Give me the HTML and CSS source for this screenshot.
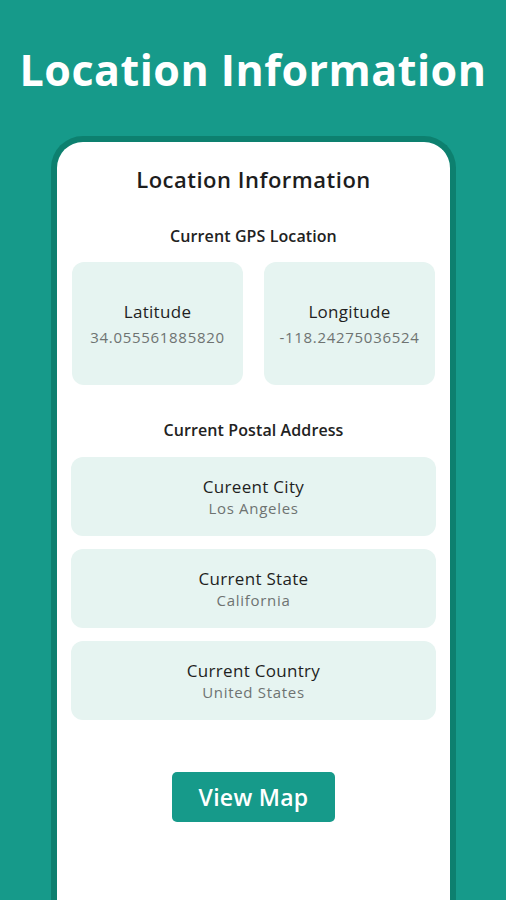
FILE: index.html
```html
<!DOCTYPE html>
<html>
  <head>
    <meta name="viewport" content="width=device-width, initial-scale=1" />
    <title>Location Information</title>
    <link rel="stylesheet" href="styles.css">
  </head>
  <body>
    <h1 class="headline">Location Information</h1>

    <div class="phone">
      <div class="screen">
        <h2 class="screen-title">Location Information</h2>

        <div class="section-label">Current GPS Location</div>
        <div class="coords">
          <div class="info-card tall">
            <div class="info-name">Latitude</div>
            <div class="info-value">34.055561885820</div>
          </div>
          <div class="info-card tall">
            <div class="info-name">Longitude</div>
            <div class="info-value">-118.24275036524</div>
          </div>
        </div>

        <div class="section-label postal">Current Postal Address</div>
        <div class="address">
          <div class="info-card">
            <div class="info-name">Cureent City</div>
            <div class="info-value">Los Angeles</div>
          </div>
          <div class="info-card">
            <div class="info-name">Current State</div>
            <div class="info-value">California</div>
          </div>
          <div class="info-card">
            <div class="info-name">Current Country</div>
            <div class="info-value">United States</div>
          </div>
        </div>

        <div class="actions">
          <button class="map-btn">View Map</button>
        </div>
      </div>
    </div>
  </body>
</html>
```

FILE: styles.css
```css
html,
body {
  margin: 0;
  height: 900px;
  overflow: hidden;
}

body {
  font-family: "Open Sans", "Noto Sans", sans-serif;
  background-color: #169a8a;
}

.headline {
  margin: 0;
  padding-top: 40px;
  height: 136px;
  box-sizing: border-box;
  text-align: center;
  color: #ffffff;
  font-size: 43px;
  font-weight: 700;
  line-height: 60px;
  letter-spacing: 0.5px;
}

.phone {
  margin: 0 50px 0 51px;
  height: 800px;
  border: 6px solid #0d806f;
  border-bottom: none;
  border-radius: 32px 32px 0 0;
  background-color: #ffffff;
  box-sizing: border-box;
}

.screen {
  padding: 22px 14px 0 14px;
}

.screen-title {
  margin: 0;
  text-align: center;
  font-size: 22px;
  font-weight: 600;
  line-height: 30px;
  letter-spacing: 0.5px;
  color: #1d1d1d;
}

.section-label {
  margin-top: 31px;
  text-align: center;
  font-size: 16px;
  font-weight: 600;
  line-height: 22px;
  letter-spacing: 0.1px;
  color: #222222;
}

.section-label.postal {
  margin-top: 34px;
}

.coords {
  margin-top: 15px;
  display: grid;
  grid-template-columns: 1fr 1fr;
  column-gap: 21px;
  padding: 0 1px;
}

.address {
  margin-top: 16px;
  display: flex;
  flex-direction: column;
  gap: 13px;
}

.info-card {
  background-color: #e6f4f1;
  border-radius: 12px;
  height: 79px;
  display: flex;
  flex-direction: column;
  justify-content: center;
  align-items: center;
  text-align: center;
}

.info-card.tall {
  height: 123px;
}

.info-card.tall .info-value {
  margin-top: 4px;
}

.info-name {
  font-size: 17px;
  line-height: 22px;
  letter-spacing: 0.3px;
  color: #1f1f1f;
}

.info-value {
  font-size: 15px;
  line-height: 20px;
  letter-spacing: 0.7px;
  color: #6e7371;
}

.actions {
  margin-top: 52px;
  display: flex;
  justify-content: center;
}

.map-btn {
  width: 163px;
  height: 50px;
  border: none;
  border-radius: 5px;
  background-color: #169a8a;
  color: #ffffff;
  font-family: "Open Sans", "Noto Sans", sans-serif;
  font-size: 23px;
  font-weight: 600;
  letter-spacing: 0.3px;
  cursor: pointer;
}
```
